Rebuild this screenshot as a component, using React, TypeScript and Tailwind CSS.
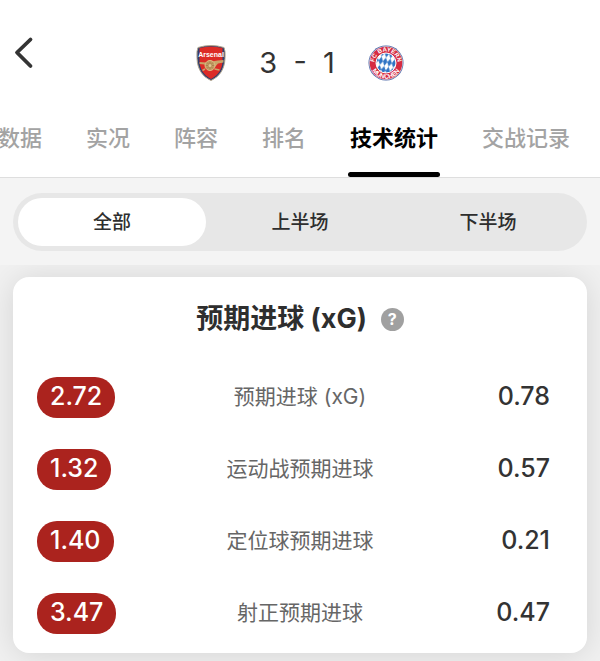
import { useState } from "react"
import clsx from "clsx"

interface IStat {
  label: string,
  home: string,
  away: string
}

const tabs = ["数据", "实况", "阵容", "排名", "技术统计", "交战记录"]
const periods = ["全部", "上半场", "下半场"]

const stats: IStat[] = [
  { label: "预期进球 (xG)", home: "2.72", away: "0.78" },
  { label: "运动战预期进球", home: "1.32", away: "0.57" },
  { label: "定位球预期进球", home: "1.40", away: "0.21" },
  { label: "射正预期进球", home: "3.47", away: "0.47" },
]

function ArsenalCrest() {
  return (
    <svg viewBox="0 0 60 72" className="h-9 w-[30px]" role="img" aria-label="Arsenal">
      <path d="M4 5Q30-3 56 5Q59 10 58 27C57 49 47 63 30 71C13 63 3 49 2 27Q1 10 4 5Z" fill="#2d3f70" stroke="#b3a58c" strokeWidth="2" />
      <path d="M7 6Q30 0 53 6V31C53 49 44 60 30 68C16 60 7 49 7 31Z" fill="#dc2b26" />
      <text x="30" y="24" textAnchor="middle" fontSize="14" fontWeight="700" fill="#fff" fontFamily="Liberation Sans, sans-serif">Arsenal</text>
      <path d="M7 34L20 35L43 31L55 30V35L44 37L38 44H21L17 39L7 38Z" fill="#c9a569" />
      <circle cx="28" cy="41" r="10" fill="#c39a62" stroke="#dfbf86" strokeWidth="2" />
      <path d="M28 33V49M20 41H36M22 35L34 47M34 35L22 47" stroke="#8f683d" strokeWidth="1" />
      <circle cx="28" cy="41" r="3" fill="#e2c792" />
      <path d="M37 48L47 50M18 48L13 51" stroke="#c9a569" strokeWidth="3" />
    </svg>
  )
}

function BayernCrest() {
  return (
    <svg viewBox="0 0 72 72" className="size-9" role="img" aria-label="FC Bayern München">
      <defs>
        <pattern id="lozenge" width="9" height="17" patternUnits="userSpaceOnUse" patternTransform="rotate(12)">
          <rect width="9" height="17" fill="#fff" />
          <path d="M4.5 0L9 8.5L4.5 17L0 8.5Z" fill="#2f74c4" />
        </pattern>
        <path id="arc-top" d="M13 36A23 23 0 0 1 59 36" />
        <path id="arc-bottom" d="M4.5 36A31.5 31.5 0 0 0 67.5 36" />
      </defs>
      <circle cx="36" cy="36" r="35" fill="#4e69a8" />
      <circle cx="36" cy="36" r="33.5" fill="#e8dfe6" />
      <circle cx="36" cy="36" r="32.5" fill="#d52b42" />
      <circle cx="36" cy="36" r="20" fill="url(#lozenge)" stroke="#fff" strokeWidth="2" />
      <g fill="#fff" fontWeight="700" fontFamily="Liberation Sans, sans-serif" textAnchor="middle">
        <text fontSize="12"><textPath href="#arc-top" startOffset="50%">FC BAYERN</textPath></text>
        <text fontSize="13"><textPath href="#arc-bottom" startOffset="50%">MÜNCHEN</textPath></text>
      </g>
    </svg>
  )
}

function MatchHeader() {
  return (
    <header className="grid grid-cols-[1fr_auto_1fr] items-start px-3 pt-8 pb-1">
      <button type="button" aria-label="返回" className="flex h-10 w-6 items-center">
        <svg viewBox="0 0 24 40" className="h-10 w-6" fill="none" stroke="#343434" strokeWidth="3.8" strokeLinecap="round" strokeLinejoin="round">
          <path d="M18.5 7.5L5 20.5L18.5 34" />
        </svg>
      </button>
      <div className="flex h-[62px] items-center gap-[33px]">
        <ArsenalCrest />
        <p className="text-[29px] whitespace-pre text-[#333]">3  -  1</p>
        <BayernCrest />
      </div>
    </header>
  )
}

function StatsTable() {
  return (
    <section className="rounded-2xl bg-white pb-1 shadow-[0_2px_32px_rgba(0,0,0,0.12)]">
      <div className="flex h-[84px] items-center justify-center gap-3.5">
        <h2 className="text-[27px] font-bold text-[#2e2e2e]">预期进球 (xG)</h2>
        <button type="button" aria-label="说明" className="flex size-[23px] items-center justify-center rounded-full bg-[#a0a0a0] text-base font-bold text-white">
          ?
        </button>
      </div>
      <table className="w-full table-fixed">
        <tbody>
          {stats.map((stat) => (
            <tr key={stat.label} className="h-[72px]">
              <td className="w-1/4 pl-6 text-left">
                <span className="flex h-[41px] w-fit items-center rounded-[20px] bg-[#ab231e] px-[13px] text-[25px] font-medium text-white">
                  {stat.home}
                </span>
              </td>
              <th scope="row" className="text-center text-[21px] font-normal text-[#666]">{stat.label}</th>
              <td className="w-1/4 pr-6">
                <span className="flex h-[41px] items-center justify-end px-[13px] text-[25px] font-medium text-[#333]">
                  {stat.away}
                </span>
              </td>
            </tr>
          ))}
        </tbody>
      </table>
    </section>
  )
}

function App() {
  const [tab, setTab] = useState("技术统计")
  const [period, setPeriod] = useState("全部")

  return (
    <div className="flex min-h-screen flex-col overflow-hidden bg-[#f1f1f1] font-[Inter,'Noto_Sans_CJK_SC',sans-serif]">
      <div className="border-b border-[#dedede] bg-white">
        <MatchHeader />
        <nav className="-ml-0.5 flex gap-11 overflow-hidden">
          {tabs.map((name) => (
            <button
              key={name}
              type="button"
              onClick={() => setTab(name)}
              className={clsx(
                "relative h-[79px] shrink-0 pt-0.5 text-[22px]",
                tab == name ? "font-bold text-black" : "font-medium text-[#a3a3a3]"
              )}
            >
              {name}
              {tab == name && <span className="absolute -inset-x-0.5 bottom-0 h-[5px] rounded-full bg-black"></span>}
            </button>
          ))}
        </nav>
      </div>

      <div className="bg-[#f4f4f4] px-[13px] pt-[15px] pb-3.5">
        <div className="flex rounded-full bg-[#e7e7e7] p-[5px]">
          {periods.map((name) => (
            <button
              key={name}
              type="button"
              onClick={() => setPeriod(name)}
              className={clsx(
                "h-12 flex-1 rounded-full pt-0.5 text-[19px] font-medium text-[#2e2e2e]",
                period == name && "bg-white"
              )}
            >
              {name}
            </button>
          ))}
        </div>
      </div>

      <main className="grow overflow-hidden px-[13px] pt-3 pb-2">
        <StatsTable />
      </main>
    </div>
  )
}

export default App
